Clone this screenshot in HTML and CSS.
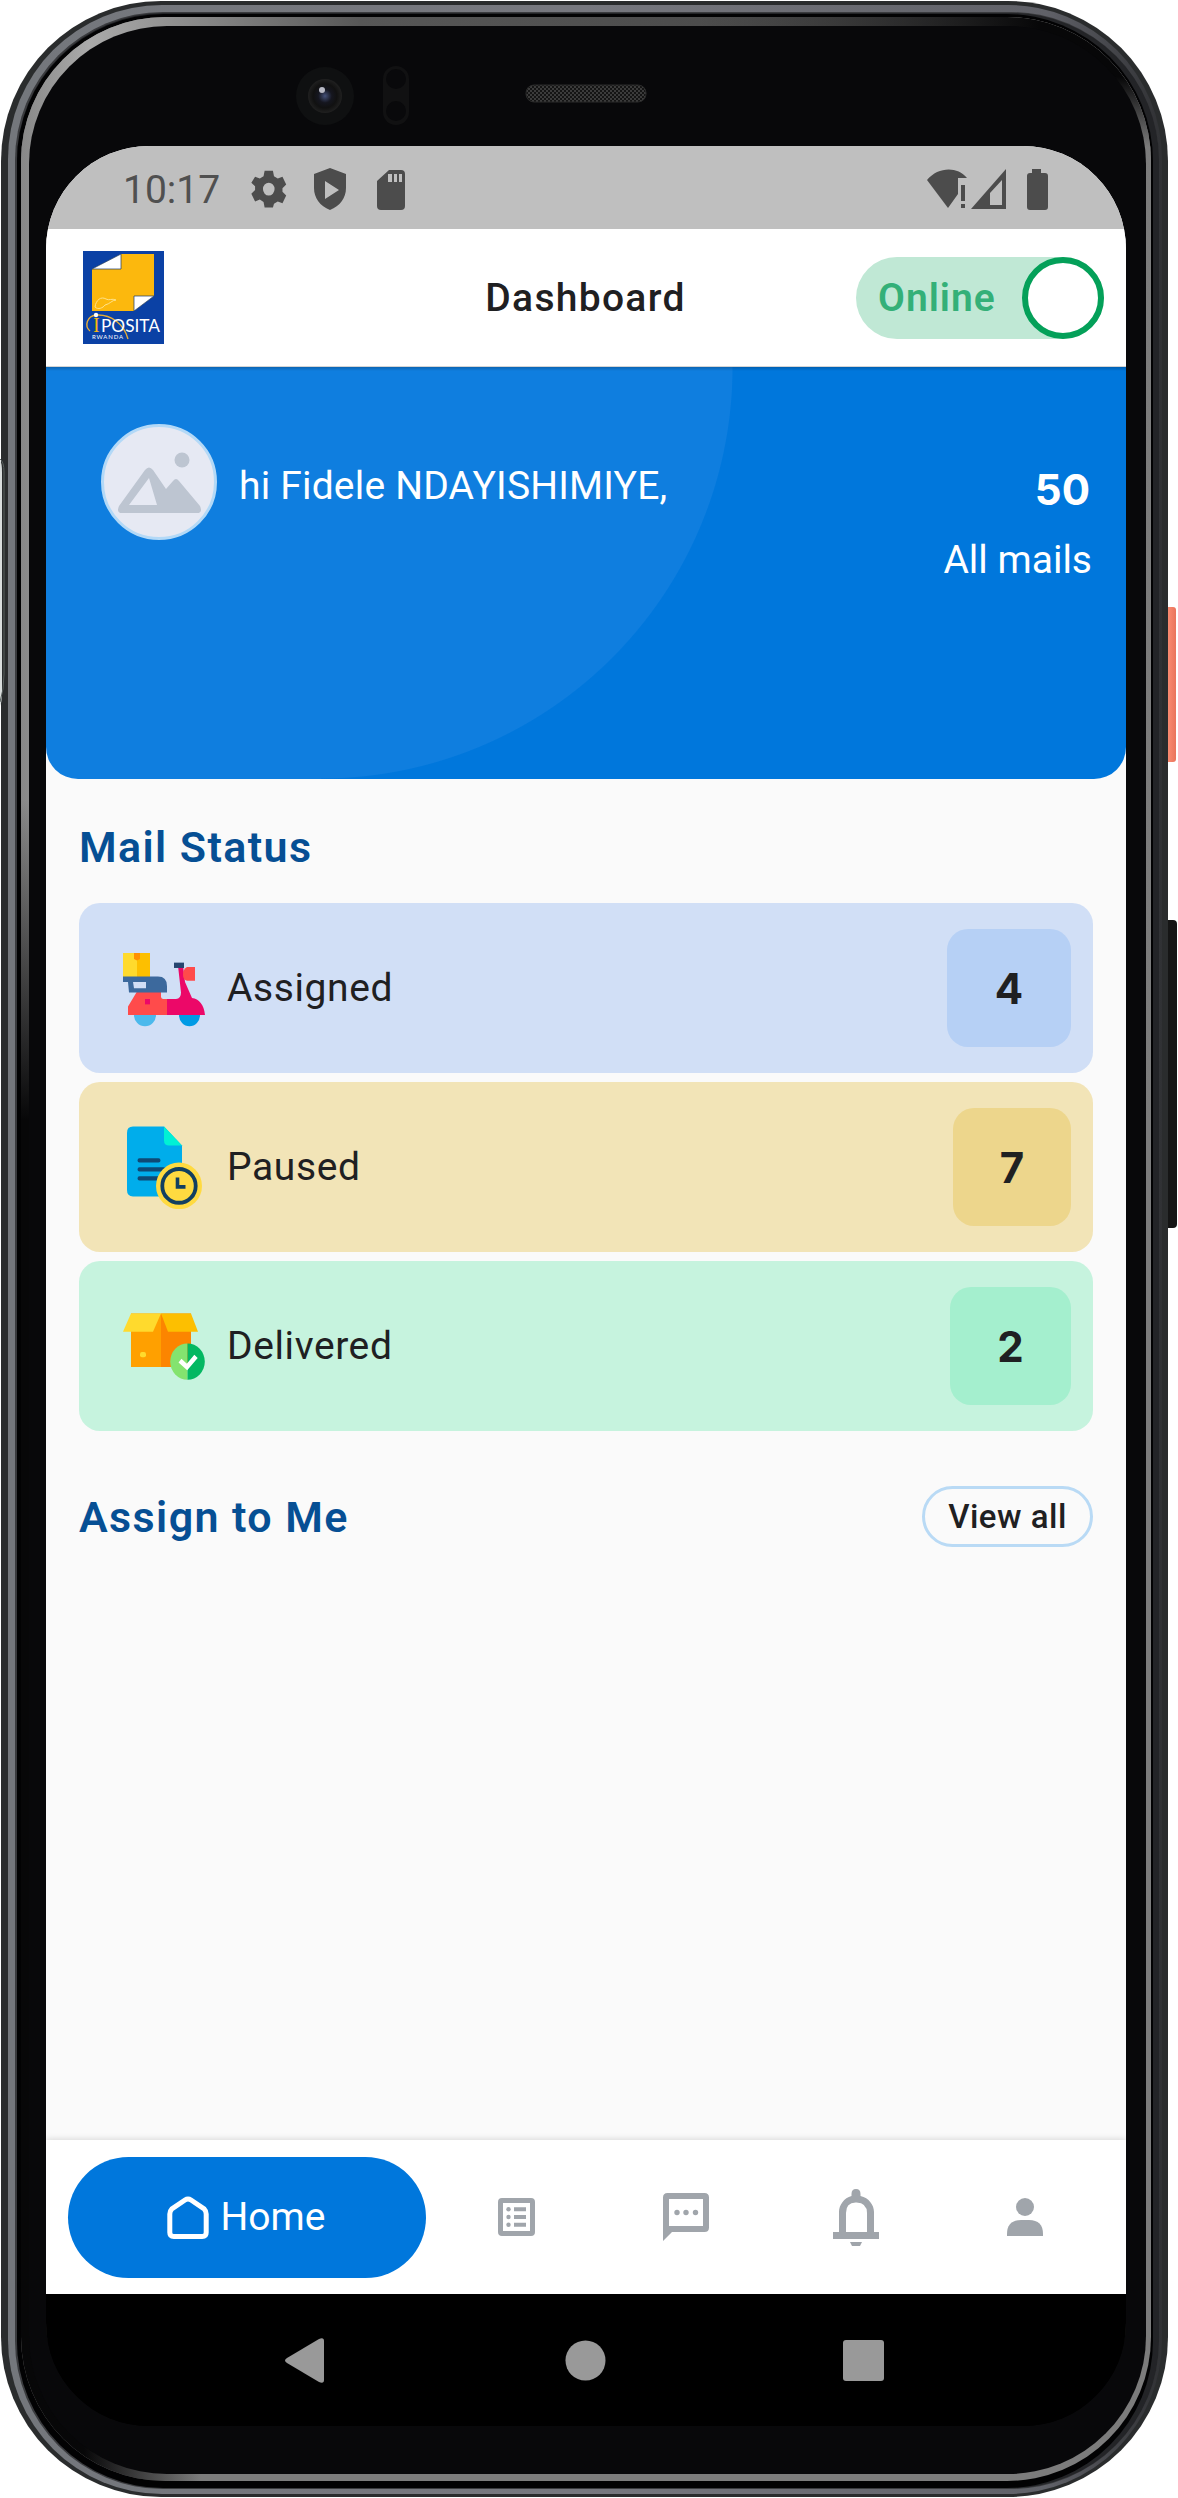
FILE: index.html
```html
<!DOCTYPE html>
<html lang="en">
<head>
<meta charset="utf-8">
<title>Dashboard</title>
<link rel="stylesheet" href="styles.css">
</head>
<body>
<div class="device">
  <svg class="shell" viewBox="0 0 1178 2498" width="1178" height="2498" aria-hidden="true">
    <defs>
      <linearGradient id="rim" x1="0" x2="1" y1="0" y2="0"><stop offset="0" stop-color="#74777c"/><stop offset=".5" stop-color="#77787f"/><stop offset=".9" stop-color="#606168"/><stop offset="1" stop-color="#303134"/></linearGradient>
      <linearGradient id="glare" x1="0" x2="1" y1="0" y2="0"><stop offset="0" stop-color="#888"/><stop offset=".06" stop-color="#aaa"/><stop offset=".3" stop-color="#575757"/><stop offset=".6" stop-color="#4c4c4c"/><stop offset="1" stop-color="#7c7c7c"/></linearGradient>
      <linearGradient id="fadeDown" x1="0" x2="0" y1="0" y2="1"><stop offset="0" stop-color="#070708" stop-opacity="0"/><stop offset=".2" stop-color="#070708"/></linearGradient>
      <linearGradient id="fadeLeft" x1="0" x2="1" y1="0" y2="0"><stop offset="0" stop-color="#070708"/><stop offset=".35" stop-color="#070708"/><stop offset="1" stop-color="#070708" stop-opacity="0"/></linearGradient>
      <linearGradient id="fadeRight" x1="0" x2="1" y1="0" y2="0"><stop offset="0" stop-color="#070708" stop-opacity="0"/><stop offset=".75" stop-color="#070708"/></linearGradient>
      <linearGradient id="fadeCorner" x1="0" x2="0" y1="0" y2="1"><stop offset="0" stop-color="#070708"/><stop offset="1" stop-color="#070708" stop-opacity="0"/></linearGradient>
      <linearGradient id="orange" x1="0" x2="1" y1="0" y2="0"><stop offset="0" stop-color="#d9654e"/><stop offset=".5" stop-color="#fa8a70"/><stop offset="1" stop-color="#e9745c"/></linearGradient>
      <pattern id="mesh" width="4" height="4" patternUnits="userSpaceOnUse"><rect width="4" height="4" fill="#141414"/><path d="M0 0h2v2H0zM2 2h2v2H2z" fill="#3b3b3b"/></pattern>
      <radialGradient id="lens"><stop offset="0" stop-color="#445078"/><stop offset=".4" stop-color="#15161f"/><stop offset=".7" stop-color="#111"/><stop offset="1" stop-color="#202020"/></radialGradient>
      <clipPath id="bezel"><rect x="21" y="17" width="1130" height="2464" rx="144"/></clipPath>
    </defs>
    <rect x="1160" y="607" width="16" height="155" rx="3" fill="url(#orange)"/>
    <rect x="1160" y="920" width="17" height="308" rx="4" fill="#151515"/>
    <rect x="1" y="1" width="1167" height="2496" rx="160" fill="#2a2c2d"/>
    <rect x="8" y="5" width="1154" height="2489" rx="154" fill="url(#rim)"/>
    <rect x="15" y="12" width="1144" height="2477" rx="148" fill="#3a3b3e"/>
    <rect x="17" y="13" width="1142" height="2475" rx="147" fill="#232427"/>
    <rect x="17" y="14" width="1136" height="2474" rx="147" fill="#020203"/>
    <g clip-path="url(#bezel)">
      <rect x="21" y="17" width="1130" height="2464" fill="#7c7c7c"/>
      <rect x="21" y="17" width="1130" height="1100" fill="url(#glare)"/>
      <rect x="21" y="800" width="40" height="1600" fill="url(#fadeDown)"/>
      <rect x="21" y="2400" width="180" height="81" fill="url(#fadeLeft)"/>
      <rect x="700" y="17" width="451" height="60" fill="url(#fadeRight)"/>
      <rect x="1060" y="77" width="91" height="70" fill="url(#fadeCorner)"/>
    </g>
    <rect x="29" y="26" width="1117" height="2448" rx="138" fill="#08080a"/>
    <path d="M0 460q2 3 2 12v220q0 10-2 14" fill="#d9dddc"/><path d="M0 459q4 3 4 13v202q0 16-4 28" fill="none" stroke="#59605e" stroke-width="1"/>
    <circle cx="325" cy="96" r="29" fill="#0f1011"/><circle cx="325" cy="96" r="17" fill="url(#lens)"/><circle cx="322" cy="90" r="3" fill="#b9bac5"/>
    <rect x="383" y="66" width="26" height="59" rx="13" fill="#111112"/><circle cx="396" cy="79" r="10" fill="#09090b"/><circle cx="396" cy="111" r="10" fill="#09090b"/>
    <rect x="526" y="85" width="120" height="17" rx="8" fill="url(#mesh)" stroke="#2a2a2a"/>
  </svg>
  <main class="screen">
    <div class="status">
      <span class="clock">10:17</span>
      <svg class="s-left" width="160" height="48" viewBox="0 0 160 48">
        <g fill="#4c4c4c">
          <path fill-rule="evenodd" d="M14 4h10l1.300 6 4.500 2.600 5.700-2 4.500 8.400-4.500 4v4l4.500 4-4.500 8.400-5.700-2-4.500 2.600L24 44H14l-1.300-6-4.500-2.600-5.700 2L-2 29l4.500-4v-4L-2 17l4.500-6.400 5.700 2 4.500-2.600zM19 17a7 7 0 1 0 0 14 7 7 0 0 0 0-14z" transform="translate(3 1) scale(.83 .92)"/>
          <path fill-rule="evenodd" d="M80 2l16 6v14c0 10-6 18-16 22-10-4-16-12-16-22V8zM75 15v18l14-9z"/>
          <path fill-rule="evenodd" d="M139 4h12a4 4 0 0 1 4 4v32a4 4 0 0 1-4 4h-20a4 4 0 0 1-4-4V15zM138 8v8h4V8zM144 8v8h3V8zM149 8v8h3V8z"/>
        </g>
      </svg>
      <svg class="s-right" width="122" height="42" viewBox="0 0 122 42">
        <g fill="#4c4c4c"><path d="M0 11C11-2 30-3 40 9h-9v16l-10 14zM34 16h4v16h-4zM34 35h4v4h-4z"/><path fill-rule="evenodd" d="M79 0v40H44zM75 11L63 24v12h12z"/><path d="M105 0h9v4h4q3 0 3 3v31q0 3-3 3h-15q-3 0-3-3V7q0-3 3-3h2z"/></g>
      </svg>
    </div>
    <header class="topbar">
      <svg class="logo" width="81" height="93" viewBox="0 0 81 93">
        <rect width="81" height="93" fill="#0b41a5"/>
        <path d="M9 18L38 3h33v42L51 60H9z" fill="#fcb80d"/>
        <path d="M9 18L38 3v15zM71 45L51 60V45z" fill="#fff" stroke="#16386f" stroke-width=".7"/>
        <path d="M12 56c1-7 6-11 11-8 3 2 6-1 10 1-4 0-6 4-11 5-2 3-7 5-10 2z" fill="none" stroke="#ffe28a" stroke-width="1"/>
        <path d="M7 80C1 75 4 65 13 64c15-1 28 9 32 24" fill="none" stroke="#e7ad38" stroke-width="1.400"/>
        <circle cx="13" cy="64" r="2.200" fill="#fff"/>
        <text x="10" y="81" class="l-i">I</text><text x="18" y="81" class="l-name" textLength="59" lengthAdjust="spacingAndGlyphs">POSITA</text>
        <text x="9" y="88" class="l-sub" textLength="31">RWANDA</text>
      </svg>
      <h1>Dashboard</h1>
      <div class="toggle"><span>Online</span><i></i></div>
    </header>
    <section class="hero">
      <svg class="avatar" width="116" height="116" viewBox="0 0 116 116">
        <circle cx="58" cy="58" r="56.500" fill="#e6e9f3" stroke="#b3d9f7" stroke-width="3"/>
        <circle cx="81" cy="36" r="7.500" fill="#bdc5d1"/>
        <path fill-rule="evenodd" d="M18 82L44 46q4-5 8 0l13 19 7-8q3-4 6 0l21 25q3 7-3 7H21q-6 0-3-7zM28 81h28L48 54z" fill="#bdc5d1"/>
      </svg>
      <p class="greet">hi Fidele NDAYISHIMIYE,</p>
      <div class="total"><b>50</b><span>All mails</span></div>
    </section>
    <section class="content">
      <h2>Mail Status</h2>
      <div class="cards">
        <article class="card blue">
          <svg width="83" height="83" viewBox="0 0 83 83"><g transform="translate(0 -1.500) scale(1 1.070)">
            <path d="M0 7h14v24H0z" fill="#ffda2d"/><path d="M14 7h13v24H14z" fill="#fdbf00"/><path d="M11 7h6v5.500l-3 1.500-3-1.500z" fill="#ff9100"/>
            <path d="M11 65h22a11 10.500 0 0 1-22 0z" fill="#4bb9ec"/><path d="M56 65h21a10.500 10.500 0 0 1-21 0z" fill="#009be5"/>
            <path d="M14 43h25v6h6v16H5v-8z" fill="#ff4b4b"/><path d="M44 50h9q5 0 5-6l-3-25h5l2 15 7 15c7 1 12 6 13 16H44z" fill="#ec0868"/>
            <path d="M38 43v5q0 2 2 2h5v-7z" fill="#d1dff6"/>
            <path d="M0 29h35q9 0 9 9v6H6L5 34H0z" fill="#3c699d"/><path d="M10 34h13v6H11z" fill="#d1def6"/><path d="M51 16h10v5H51z" fill="#26456f"/><path d="M64 20h8v13h-8q-4-1-4-6t4-7z" fill="#ff4b4b"/><path d="M22 50h5v5h-5z" fill="#ec0868"/>
          </g></svg>
          <span>Assigned</span><b class="n4">4</b>
        </article>
        <article class="card yellow">
          <svg width="83" height="83" viewBox="0 0 83 83"><g transform="translate(0 -1.600) scale(1 1.060)">
            <path d="M10 2h31l18 18v48H10q-6 0-6-6V8q0-6 6-6z" fill="#00adeb"/><path d="M41 2l18 18H46q-5 0-5-5z" fill="#00f1d5"/>
            <path d="M16.500 34h19M16.500 42.500h24M16.500 51h20" stroke="#0e4975" stroke-width="4" stroke-linecap="round"/>
            <ellipse cx="56" cy="58" rx="23" ry="22" fill="#ffda40"/><ellipse cx="56" cy="58" rx="16.700" ry="16" fill="#ffda40" stroke="#123f60" stroke-width="3.800"/><path d="M54.500 50v9h8" fill="none" stroke="#123f60" stroke-width="3.600"/>
          </g></svg>
          <span>Paused</span><b class="n7">7</b>
        </article>
        <article class="card green">
          <svg width="83" height="83" viewBox="0 0 83 83"><g transform="translate(0 -2.200) scale(1 1.070)">
            <path d="M8 10h30v50H8z" fill="#ffa000"/><path d="M38 10h30v50H38z" fill="#fc8500"/><path d="M8 10h30l-8 17H0z" fill="#ffda2d"/><path d="M38 10h30l7 17H45z" fill="#fdbf00"/><rect x="17" y="46" width="6" height="5" rx="2" fill="#ffda2d"/>
            <path d="M64.500 38a17.300 17 0 0 0 0 34z" fill="#84e36f"/><path d="M64.500 38a17.300 17 0 0 1 0 34z" fill="#04b862"/><path d="M57 54l7 6 9-10" fill="none" stroke="#fff" stroke-width="4.500"/>
          </g></svg>
          <span>Delivered</span><b class="n2">2</b>
        </article>
      </div>
      <div class="assign"><h2>Assign to Me</h2><span class="view">View all</span></div>
    </section>
    <nav class="tabs">
      <div class="home"><svg width="42" height="43" viewBox="0 0 42 43"><path d="M2.800 18q0-3 2-5L18 4q3-2 6 0l13.200 9q2 2 2 5v18.500q0 4-4 4h-28.400q-4 0-4-4z" fill="none" stroke="#fff" stroke-width="5"/></svg><span>Home</span></div>
      <div class="tab"><svg width="37" height="38" viewBox="0 0 37 38"><path fill-rule="evenodd" d="M4 0h29q4 0 4 4v30q0 4-4 4H4q-4 0-4-4V4q0-4 4-4zM5 5v28h27V5z" fill="#a0a5ab"/><path d="M16 11.300h12M16 19h12M16 26.700h12" stroke="#a0a5ab" stroke-width="4"/><g fill="#a0a5ab"><circle cx="10.500" cy="11.300" r="2.200"/><circle cx="10.500" cy="19" r="2.200"/><circle cx="10.500" cy="26.700" r="2.200"/></g></svg></div>
      <div class="tab"><svg width="46" height="48" viewBox="0 0 46 48"><path fill-rule="evenodd" d="M4.500 0h37Q46 0 46 4.500v30q0 4.500-4.500 4.500H9l-9 9V4.500Q0 0 4.500 0zM6 6v27h34V6z" fill="#a0a5ab"/><g fill="#a0a5ab"><circle cx="14" cy="19.500" r="2.700"/><circle cx="23" cy="19.500" r="2.700"/><circle cx="32.500" cy="19.500" r="2.700"/></g></svg></div>
      <div class="tab"><svg width="46" height="57" viewBox="0 0 46 57"><path fill-rule="evenodd" d="M18.500 7V5q0-5 4.500-5t4.500 5v2C36 9 41 16 41 23v20h5v7H0v-7h6V23C6 16 11 9 18.500 7zM13 43h21V24q0-10-10.500-10.500T13 24zM17 53h12l-2 4h-8z" fill="#a0a5ab"/></svg></div>
      <div class="tab"><svg width="36" height="38" viewBox="0 0 36 38"><circle cx="18" cy="9" r="9" fill="#a0a5ab"/><path d="M0 38v-2q0-14 14-14h8q14 0 14 14v2z" fill="#a0a5ab"/></svg></div>
    </nav>
    <footer class="system">
      <svg width="39" height="45" viewBox="0 0 39 45"><path d="M2 20L34 1q5-2 5 2v39q0 4-5 2L2 25q-4-2.500 0-5z" fill="#999"/></svg>
      <svg class="circle" width="41" height="41" viewBox="0 0 41 41"><circle cx="20.500" cy="20.500" r="20" fill="#999"/></svg>
      <svg width="41" height="41" viewBox="0 0 41 41"><rect width="41" height="41" rx="3" fill="#999"/></svg>
    </footer>
  </main>
</div>
</body>
</html>
```
FILE: styles.css
```css
* { box-sizing: border-box; }
body { margin: 0; background: #fff; font-family: Roboto, "Liberation Sans", sans-serif; color: #1f2022; }
h1, h2, p { margin: 0; font-weight: 600; }
svg { display: block; flex: none; }
.device { position: relative; width: 1178px; height: 2498px; padding: 146px 52px 72px 46px; overflow: hidden; }
.shell { position: absolute; inset: 0; }
.screen { position: relative; display: flex; flex-direction: column; width: 1080px; height: 2280px; border-radius: 103px; overflow: hidden; background: linear-gradient(#fafafa 2100px, #000 2200px); }
.status { flex: none; height: 83px; display: flex; align-items: center; background: #bfbfbf; padding: 4px 77px 0 77px; }
.clock { font-size: 39px; width: 127px; color: #505050; }
.s-right { margin-left: auto; }
.topbar { flex: none; height: 138px; display: flex; align-items: center; justify-content: space-between; padding: 0 22px 0 37px; background: #fff; border-bottom: 1px solid #d4d4d4; }
.l-i { font: 20px "Liberation Serif", serif; fill: #fcb80d; }
.l-name { font: 18px Lato, sans-serif; fill: #fff; }
.l-sub { font: 6px Lato, sans-serif; fill: #fff; }
h1 { font-size: 39px; font-weight: 500; letter-spacing: 1.3px; padding-left: 151px; }
.toggle { display: flex; align-items: center; justify-content: space-between; width: 248px; height: 82px; border-radius: 41px; background: #c0e8d5; padding-left: 22px; color: #34b078; font-size: 39px; font-weight: 600; letter-spacing: 1px; }
.toggle i { width: 82px; height: 82px; border: 6px solid #04a059; border-radius: 50%; background: #fff; }
.hero { flex: none; height: 412px; display: flex; align-items: flex-start; padding: 57px 34px 0 55px; border-radius: 0 0 32px 32px; color: #fff; background: linear-gradient(#0003, #0000) 0 0 / 100% 4px no-repeat, linear-gradient(#0f7edf, #0f7edf) 0 0 / 275px 100% no-repeat, radial-gradient(circle 412px at 275px 0, #0f7edf 411px, #0077dc 412px); }
.greet { font-size: 39px; font-weight: 400; line-height: 46px; margin: 39px 0 0 22px; letter-spacing: .2px; }
.total { margin-left: auto; text-align: right; font-size: 39px; line-height: 46px; padding-top: 43px; }
.total b { display: block; margin: 0 2px 24px 0; }
.total b, .card b { font-family: Inter, Roboto, sans-serif; font-size: 42px; font-weight: 700; }
.content { padding: 42px 33px 0; }
h2 { font-size: 43px; line-height: 52px; color: #064f94; letter-spacing: 1.4px; }
.cards { display: grid; gap: 9px; margin-top: 30px; }
.card { height: 170px; border-radius: 21px; display: flex; align-items: center; padding: 0 22px 0 44px; font-size: 39px; }
.card span { margin-left: 21px; letter-spacing: .6px; }
.card b { margin-left: auto; height: 118px; border-radius: 21px; display: flex; align-items: center; justify-content: center; }
.blue { background: #d1dff6; } .blue b { background: #b6d0f5; }
.yellow { background: #f2e4b7; } .yellow b { background: #edd68c; }
.green { background: #c6f3de; } .green b { background: #a4efce; }
.n4 { width: 124px; } .n7 { width: 118px; } .n2 { width: 121px; }
.assign { display: flex; justify-content: space-between; align-items: center; margin-top: 55px; height: 61px; }
.view { width: 171px; height: 61px; border: 3px solid #b9daf5; border-radius: 31px; text-align: center; line-height: 55px; font-size: 33px; font-weight: 500; letter-spacing: .5px; }
.tabs { margin-top: auto; flex: none; height: 154px; display: flex; align-items: center; padding: 0 16px 0 22px; background: #fff; box-shadow: 0 -1px 6px #0002; }
.home { width: 358px; height: 121px; border-radius: 61px; background: #0077dc; color: #fff; display: flex; align-items: center; justify-content: center; gap: 12px; font-size: 39px; margin-right: 6px; padding-right: 2px; }
.tab { flex: 1; display: flex; justify-content: center; }
.system { flex: none; height: 132px; background: #000; display: flex; align-items: center; padding: 0 242px 0 239px; justify-content: space-between; }
.circle { margin-left: 4px; }
```
